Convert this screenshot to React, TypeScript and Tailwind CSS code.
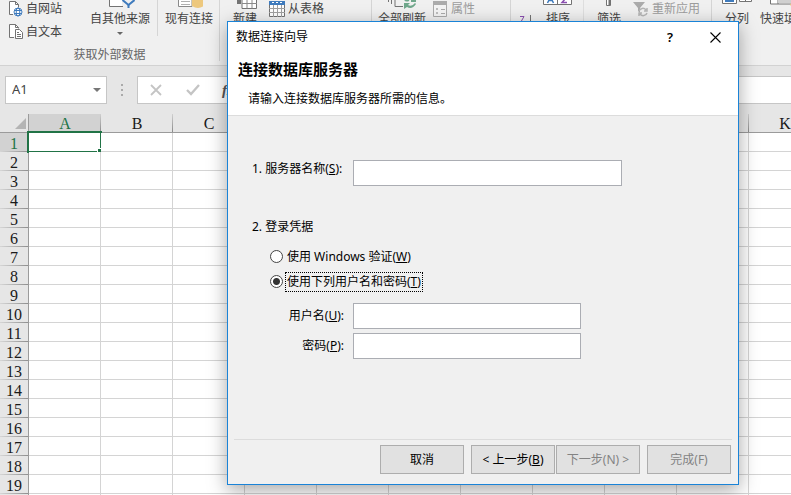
import React, { useState } from "react";

const columns = ["A", "B", "C", "D", "E", "F", "G", "H", "I", "J", "K"];
const rows = Array.from({ length: 20 }, (_, i) => i + 1);

const ribbonText = "text-xs leading-[18px] whitespace-nowrap";

const SmallButton = ({ icon, label, disabled = false }: { icon: React.ReactNode; label: string; disabled?: boolean }) => (
  <button
    disabled={disabled}
    className={`flex h-[18px] items-center gap-[3px] ${ribbonText} ${disabled ? "text-[#9c9c9c]" : "text-[#444]"}`}
  >
    {icon}
    {label}
  </button>
);

const BigButton = ({ icon, label, arrow = false }: { icon: React.ReactNode; label: string; arrow?: boolean }) => (
  <button className={`flex flex-col items-center text-[#444] ${ribbonText}`}>
    <span className="flex h-[10px] justify-center">{icon}</span>
    <span>{label}</span>
    {arrow && (
      <svg className="mt-[4px]" width="6" height="3" viewBox="0 0 6 3">
        <path d="M0 0h6L3 3z" fill="#666" />
      </svg>
    )}
  </button>
);

const WebIcon = () => (
  <svg width="14" height="16" viewBox="0 0 14 16" fill="none">
    <path d="M4 13.500H.5V.5h6l3 3v3" stroke="#737373" fill="#fff" />
    <path d="M6.500 .5v3h3" stroke="#737373" />
    <circle cx="9" cy="11" r="4" stroke="#3f7bbd" fill="#fff" />
    <ellipse cx="9" cy="11" rx="1.800" ry="4" stroke="#3f7bbd" />
    <path d="M5 9.500h8M5 12.500h8" stroke="#3f7bbd" />
  </svg>
);

const TextFileIcon = () => (
  <svg width="14" height="16" viewBox="0 0 14 16" fill="none">
    <path d="M5 13.500H.5V.5h6l3 3v1" stroke="#737373" fill="#fff" />
    <path d="M6.500 .5v3h3" stroke="#737373" />
    <path d="M6.500 5.500h4l3 3v6h-7z" stroke="#737373" fill="#fff" />
    <path d="M8 8.500h2M8 10.500h4M8 12.500h4" stroke="#737373" />
  </svg>
);

const OtherSourceIcon = () => (
  <svg width="30" height="10" viewBox="0 0 30 10" fill="none">
    <path d="M4.500 0v6.500H18" stroke="#737373" />
    <path d="M5 0h12v6H5z" fill="#fff" />
    <path d="M17.500 0l6 5 6-5" fill="#f0f0f0" stroke="#3f7bbd" strokeWidth="2" />
    <path d="M23.500 4v4" stroke="#3f7bbd" strokeWidth="2" />
  </svg>
);

const ConnectionIcon = () => (
  <svg width="28" height="10" viewBox="0 0 28 10" fill="none">
    <path d="M3.500 0v6.500H17V0" fill="#fff" stroke="#8a8a8a" />
    <path d="M6 1.500h9M6 4.500h9" stroke="#b0b0b0" />
    <path d="M17 0h12v6q-6 4-12 0z" fill="#edc87e" />
  </svg>
);

const NewQueryIcon = () => (
  <svg className="shrink-0" width="32" height="10" viewBox="0 0 32 10" fill="none">
    <path d="M8.500-1h19v9.500H13V-1" fill="#fff" stroke="#737373" />
    <path d="M13 3.500h15M18 0v8.500M23 0v8.500" stroke="#8a8a8a" />
    <path d="M8 0h4v4H8z" fill="#737373" />
  </svg>
);

const TableIcon = () => (
  <svg width="16" height="16" viewBox="0 0 16 16" fill="none">
    <path d="M.5 0h15v15.500H.5z" fill="#fff" stroke="#737373" />
    <path d="M0 0h16v4H0z" fill="#3f7bbd" />
    <path d="M3 1.500h2M7 1.500h2M11 1.500h2" stroke="#fff" />
    <path d="M0 7.500h16M0 11.500h16M4.500 4v12M8.500 4v12M12.500 4v12" stroke="#a0a0a0" />
  </svg>
);

const RefreshIcon = () => (
  <svg width="30" height="10" viewBox="0 0 30 10" fill="none">
    <path d="M1.500 0v2M4.500 0v4M8 0v6.500h8" stroke="#737373" />
    <path d="M18 0q1 1 4 0" stroke="#6fa78b" strokeWidth="2" />
    <path d="M24-2h5v4h-5zM17 3h6l-2 2q4 2 7-2l1 1q-4 6-9 3l-3 2z" fill="#6fa78b" />
  </svg>
);

const PropertiesIcon = () => (
  <svg className="mr-px" width="14" height="16" viewBox="0 0 14 16" fill="none">
    <path d="M.5.5h13v15H.5z" fill="#f4f4f4" stroke="#ababab" />
    <path d="M0 0h14v4H0z" fill="#ababab" />
    <path d="M3.500 7.500h1v1h-1zM3.500 11.500h1v1h-1z" stroke="#ababab" />
    <path d="M8 8.500h4M8 12.500h4" stroke="#ababab" />
  </svg>
);

const ZaIcon = () => (
  <svg width="14" height="10" viewBox="0 0 14 10" fill="none">
    <path d="M1 1.500h4L1 8.500h5" stroke="#8b4fb0" />
    <path d="M11.500 0v9" stroke="#737373" />
  </svg>
);

const SortIcon = () => (
  <svg className="shrink-0" width="30" height="10" viewBox="0 0 30 10" fill="none">
    <path d="M.5 0v4.500h28V0M14.500 0v4.500" fill="#fff" stroke="#737373" />
    <path d="M4.500 3l3-6 3 6M6 .5h3" stroke="#3f7bbd" strokeWidth="1.500" />
    <path d="M23-2l-4 4.500h5" stroke="#8b4fb0" strokeWidth="1.500" />
  </svg>
);

const FilterIcon = () => (
  <svg width="6" height="10" viewBox="0 0 6 10">
    <path d="M.5-1h4v6.500h-4z" fill="#fff" stroke="#737373" />
    <path d="M2.500 0h2v5h-2z" fill="#737373" />
  </svg>
);

const ReapplyIcon = () => (
  <svg className="mr-px" width="15" height="16" viewBox="0 0 15 16" fill="none">
    <path d="M0 1h12L7 7v5L5 10V7z" fill="#ababab" />
    <path d="M6 10a4 4 0 0 1 7-1M14 7v3h-3M14 12a4 4 0 0 1-7 1M6 15v-3h3" stroke="#b5b5b5" strokeWidth="1.500" />
  </svg>
);

const SplitIcon = () => (
  <svg className="shrink-0" width="30" height="10" viewBox="0 0 30 10" fill="none">
    <path d="M.5 0v3.500h14V0M17.500 0v1.500h12V0M23.500 0v1.500" fill="#fff" stroke="#737373" />
    <path d="M3 0h9v2H3z" fill="#3f7bbd" />
  </svg>
);

const FlashFillIcon = () => (
  <svg width="32" height="10" viewBox="0 0 32 10">
    <path d="M2.500-1h22v5h-22zM10 0v4" fill="#fff" stroke="#737373" />
    <path d="M10 0h14v3H10z" fill="#d0d0d0" />
    <path d="M25-1h5l-4 9-4-3z" fill="#edc87e" />
  </svg>
);

const Ribbon = () => (
  <div className="flex h-[66px] overflow-hidden border-b border-[#d2d2d2] bg-[#f0f0f0]">
    <div className="flex h-[61px] w-[220px] shrink-0 flex-col border-r border-[#d5d5d5]">
      <div className="flex h-9 pl-[9px]">
        <div className="flex w-[81px] flex-col gap-[5px]">
          <SmallButton icon={<WebIcon />} label="自网站" />
          <SmallButton icon={<TextFileIcon />} label="自文本" />
        </div>
        <BigButton icon={<OtherSourceIcon />} label="自其他来源" arrow />
        <div className="mx-[7px] w-px bg-[#d5d5d5]" />
        <BigButton icon={<ConnectionIcon />} label="现有连接" />
      </div>
      <div className="mt-[10px] text-center text-xs leading-[18px] text-[#666]">获取外部数据</div>
    </div>

    <div className="flex h-[61px] w-[152px] shrink-0 items-start gap-2 border-r border-[#d5d5d5] pl-[9px]">
      <BigButton icon={<NewQueryIcon />} label="新建" />
      <SmallButton icon={<TableIcon />} label="从表格" />
    </div>

    <div className="flex h-[61px] w-[139px] shrink-0 items-start gap-[7px] border-r border-[#d5d5d5] pl-[6px]">
      <BigButton icon={<RefreshIcon />} label="全部刷新" />
      <SmallButton icon={<PropertiesIcon />} label="属性" disabled />
    </div>

    <div className="flex h-[61px] w-[201px] shrink-0 items-start border-r border-[#d5d5d5] pl-2">
      <button aria-label="降序" className="mt-[15px]">
        <ZaIcon />
      </button>
      <div className="ml-[10px]">
        <BigButton icon={<SortIcon />} label="排序" />
      </div>
      <div className="mr-[13px] ml-[10px] h-full w-px bg-[#dedede]" />
      <BigButton icon={<FilterIcon />} label="筛选" />
      <div className="ml-3">
        <SmallButton icon={<ReapplyIcon />} label="重新应用" disabled />
      </div>
    </div>

    <div className="flex items-start gap-2 pl-[10px]">
      <BigButton icon={<SplitIcon />} label="分列" />
      <BigButton icon={<FlashFillIcon />} label="快速填充" />
    </div>
  </div>
);

const FormulaBar = () => (
  <div className="flex h-12 bg-[#e6e6e6] pt-[10px] pl-[5px]">
    <div className="flex h-7 w-[102px] items-center border border-[#c6c6c6] bg-white pr-[5px] pl-[6px]">
      <input
        aria-label="名称框"
        defaultValue="A1"
        className="w-full min-w-0 bg-transparent text-[13px] text-[#444] outline-none"
      />
      <button aria-label="展开名称框">
        <svg width="8" height="4" viewBox="0 0 8 4">
          <path d="M0 0h8L4 4z" fill="#777" />
        </svg>
      </button>
    </div>
    <div className="flex h-7 w-[30px] flex-col items-center justify-center gap-[3px]">
      <span className="size-[2px] bg-[#aaa]" />
      <span className="size-[2px] bg-[#aaa]" />
      <span className="size-[2px] bg-[#aaa]" />
    </div>
    <div className="flex h-7 flex-1 items-center border border-r-0 border-[#c6c6c6] bg-white pl-[12px]">
      <button aria-label="取消输入">
        <svg width="12" height="12" viewBox="0 0 12 12">
          <path d="M1 1l10 10M11 1L1 11" stroke="#c4c4c4" strokeWidth="1.800" />
        </svg>
      </button>
      <button aria-label="输入" className="ml-6">
        <svg width="14" height="12" viewBox="0 0 14 12">
          <path d="M1 6l4 4 8-9" fill="none" stroke="#c4c4c4" strokeWidth="2.300" />
        </svg>
      </button>
      <button className="ml-[22px] font-['Liberation_Serif',serif] text-[15px] font-bold text-[#555] italic">fx</button>
      <input aria-label="编辑栏" className="ml-2 min-w-0 flex-1 bg-transparent outline-none" />
    </div>
  </div>
);

const Sheet = () => (
  <table className="w-[821px] table-fixed border-separate border-spacing-0 font-['Liberation_Serif',serif] text-base leading-4 text-[#1a1a1a]">
    <colgroup>
      <col className="w-[29px]" />
      {columns.map((c) => (
        <col key={c} className="w-[72px]" />
      ))}
    </colgroup>
    <thead>
      <tr>
        <th className="h-[19px] border-r border-b border-[#9b9b9b] bg-[#e6e6e6] p-0">
          <svg className="ml-auto mr-[2px]" width="11" height="11" viewBox="0 0 11 11">
            <path d="M11 0v11H0z" fill="#b4b4b4" />
          </svg>
        </th>
        {columns.map((c) => (
          <th
            key={c}
            className={`h-[19px] border-b border-[#9b9b9b] bg-[linear-gradient(#d0d0d0,#8a8a8a)] bg-[length:1px_100%] bg-right bg-no-repeat p-0 pt-[2px] font-normal ${
              c === "A" ? "bg-[#d2d2d2] text-[#217346]" : "bg-[#e6e6e6]"
            }`}
          >
            {c}
          </th>
        ))}
      </tr>
    </thead>
    <tbody>
      {rows.map((r) => (
        <tr key={r}>
          <th
            className={`h-[19px] border-r border-[#9b9b9b] bg-[linear-gradient(90deg,#d6d6d6,#8f8f8f)] bg-[length:100%_1px] bg-bottom bg-no-repeat p-0 pt-[3px] font-normal ${
              r === 1 ? "bg-[#d2d2d2] text-[#217346]" : "bg-[#e6e6e6]"
            }`}
          >
            {r}
          </th>
          {columns.map((c) => (
            <td key={c} className="relative border-r border-b border-[#d4d4d4] bg-white p-0">
              {r === 1 && c === "A" && (
                <div className="absolute -top-[2px] -right-[2px] -bottom-[2px] -left-[2px] border-2 border-[#217346]">
                  <span className="absolute -right-[4px] -bottom-[4px] size-[7px] border border-white bg-[#217346]" />
                </div>
              )}
            </td>
          ))}
        </tr>
      ))}
    </tbody>
  </table>
);

const fieldClass = "h-[26px] border border-[#abadb3] bg-white px-1 text-xs outline-none";
const buttonClass =
  "h-[29px] w-[84px] border border-[#adadad] bg-[#e1e1e1] text-xs whitespace-nowrap disabled:text-[#838383]";
const radioClass =
  "size-[13px] appearance-none rounded-full border border-[#444] bg-white checked:bg-[radial-gradient(circle,#333_0,#333_3px,#fff_4px)]";

const ConnectionWizard = () => {
  const [auth, setAuth] = useState("password");

  return (
    <div
      role="dialog"
      aria-labelledby="wizard-title"
      className="absolute top-[21px] left-[227px] w-[512px] border border-[#1a83d7] bg-[#f0f0f0] text-xs leading-4 text-black shadow-[0_5px_18px_rgba(0,0,0,0.35)]"
    >
      <div className="h-[94px] border-b border-[#dcdcdc] bg-white">
        <div className="flex h-[30px] items-center pr-[17px] pl-2">
          <span id="wizard-title" className="flex-1">
            数据连接向导
          </span>
          <button aria-label="帮助" className="w-4 text-[13px] font-semibold">
            ?
          </button>
          <button aria-label="关闭" className="ml-8">
            <svg width="11" height="11" viewBox="0 0 11 11">
              <path d="M.5.5l10 10M10.500.5l-10 10" stroke="#000" strokeWidth="1.100" />
            </svg>
          </button>
        </div>
        <h1 className="mt-[7px] pl-[10px] text-[15px] leading-5 font-bold">连接数据库服务器</h1>
        <p className="mt-3 pl-5">请输入连接数据库服务器所需的信息。</p>
      </div>

      <form className="h-[323px] pt-11 pl-6" onSubmit={(e) => e.preventDefault()}>
        <div className="flex">
          <label htmlFor="server" className="w-[101px] pt-px whitespace-nowrap">
            1. 服务器名称(<u>S</u>):
          </label>
          <input id="server" type="text" className={`w-[269px] ${fieldClass}`} />
        </div>

        <fieldset className="mt-[33px]">
          <legend>2. 登录凭据</legend>
          <div className="mt-[9px] ml-[18px] flex h-[25px] items-center gap-[2px]">
            <input
              id="auth-windows"
              type="radio"
              name="auth"
              checked={auth === "windows"}
              onChange={() => setAuth("windows")}
              className={radioClass}
            />
            <label htmlFor="auth-windows" className="px-[2px]">
              使用 Windows 验证(<u>W</u>)
            </label>
          </div>
          <div className="ml-[18px] flex h-[25px] items-center gap-[2px]">
            <input
              id="auth-password"
              type="radio"
              name="auth"
              checked={auth === "password"}
              onChange={() => setAuth("password")}
              className={radioClass}
            />
            <label htmlFor="auth-password" className="border border-dotted border-black px-px py-px">
              使用下列用户名和密码(<u>T</u>)
            </label>
          </div>
        </fieldset>

        <div className="mt-[9px] flex items-center gap-[9px]">
          <label htmlFor="user" className="w-[92px] text-right">
            用户名(<u>U</u>):
          </label>
          <input id="user" type="text" className={`w-[228px] ${fieldClass}`} />
        </div>
        <div className="mt-1 flex items-center gap-[9px]">
          <label htmlFor="password" className="w-[92px] text-right">
            密码(<u>P</u>):
          </label>
          <input id="password" type="password" className={`w-[228px] ${fieldClass}`} />
        </div>
      </form>

      <div className="mx-[6px] flex justify-end border-t border-[#dcdcdc] pt-[5px] pr-px pb-[10px]">
        <button className={buttonClass}>取消</button>
        <button className={`mr-px ml-[7px] ${buttonClass}`}>
          &lt; 上一步(<u>B</u>)
        </button>
        <button disabled className={buttonClass}>
          下一步(N) &gt;
        </button>
        <button disabled className={`ml-[7px] ${buttonClass}`}>
          完成(F)
        </button>
      </div>
    </div>
  );
};

export default function App() {
  return (
    <div className="relative h-screen overflow-hidden bg-white font-['Noto_Sans','Noto_Sans_CJK_SC',sans-serif]">
      <Ribbon />
      <FormulaBar />
      <Sheet />
      <ConnectionWizard />
    </div>
  );
}
